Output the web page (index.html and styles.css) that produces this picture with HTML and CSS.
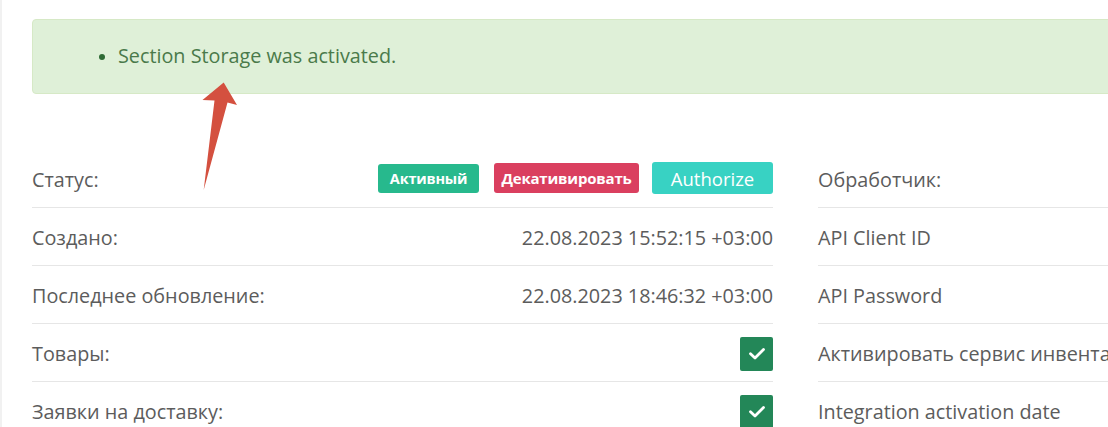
FILE: index.html
```html
<!DOCTYPE html>
<html lang="ru">
<head>
<meta charset="utf-8">
<title>Section Storage</title>
<link rel="stylesheet" href="styles.css">
</head>
<body>
<div class="page">
  <div class="alert">
    <ul class="alert-list">
      <li>Section Storage was activated.</li>
    </ul>
  </div>

  <div class="cols">
    <div class="col">
      <div class="row">
        <span class="label">Статус:</span>
        <span class="value buttons">
          <span class="badge badge-green">Активный</span>
          <span class="badge badge-red">Декативировать</span>
          <span class="btn-auth">Authorize</span>
        </span>
      </div>
      <div class="row">
        <span class="label">Создано:</span>
        <span class="value">22.08.2023 15:52:15 +03:00</span>
      </div>
      <div class="row">
        <span class="label">Последнее обновление:</span>
        <span class="value">22.08.2023 18:46:32 +03:00</span>
      </div>
      <div class="row">
        <span class="label">Товары:</span>
        <span class="check"><svg width="18" height="13" viewBox="0 0 18 13"><path d="M2.5 6.8 L7 11 L15.5 2.5" fill="none" stroke="#fff" stroke-width="2.8" stroke-linecap="round" stroke-linejoin="round"/></svg></span>
      </div>
      <div class="row">
        <span class="label">Заявки на доставку:</span>
        <span class="check"><svg width="18" height="13" viewBox="0 0 18 13"><path d="M2.5 6.8 L7 11 L15.5 2.5" fill="none" stroke="#fff" stroke-width="2.8" stroke-linecap="round" stroke-linejoin="round"/></svg></span>
      </div>
    </div>
    <div class="col">
      <div class="row"><span class="label">Обработчик:</span></div>
      <div class="row"><span class="label">API Client ID</span></div>
      <div class="row"><span class="label">API Password</span></div>
      <div class="row"><span class="label">Активировать сервис инвентаризации</span></div>
      <div class="row"><span class="label">Integration activation date</span></div>
    </div>
  </div>

  <svg class="arrow" width="60" height="120" viewBox="190 78 60 120">
    <path d="M221.7 82.5 L235 105 L225.5 102.5 L201.7 190 L212.5 100.5 L200.5 100 Z" fill="#d4503f"/>
  </svg>
</div>
</body>
</html>
```

FILE: styles.css
```css
html, body {
  margin: 0;
  padding: 0;
  background: #fff;
  overflow: hidden;
}

body {
  font-family: "Open Sans", "Liberation Sans", sans-serif;
  color: #5c5c5c;
  width: 1108px;
  height: 427px;
  border-left: 2px solid #f1f1f1;
  box-sizing: border-box;
}

.page {
  position: relative;
  width: 1600px;
  padding: 19px 0 0 30px;
}

.alert {
  width: 1527px;
  height: 75px;
  box-sizing: border-box;
  background: #dff0d8;
  border: 1px solid #d6e9c6;
  border-radius: 4px;
  color: #4a7a4a;
  display: flex;
  align-items: center;
}

.alert-list {
  margin: 0;
  padding: 0 0 3px 85px;
  font-size: 19.8px;
  list-style: disc;
}

.alert-list li::marker {
  color: #2f6b35;
  font-size: 17px;
}

.cols {
  display: flex;
  gap: 45px;
  margin-top: 55px;
}

.col {
  width: 741px;
  flex: none;
}

.row {
  height: 55px;
  border-bottom: 1px solid #e6e6e6;
  display: flex;
  align-items: center;
  justify-content: space-between;
  font-size: 19.8px;
  padding-top: 2px;
  box-sizing: content-box;
  white-space: nowrap;
}

.row:first-child {
  height: 56px;
}

.label {
  color: #5c5c5c;
}

.value {
  color: #5c5c5c;
}

.buttons {
  display: flex;
  align-items: center;
  gap: 14px;
  margin-top: -2px;
}

.badge {
  display: inline-flex;
  align-items: center;
  justify-content: center;
  height: 29px;
  border-radius: 3px;
  color: #fff;
  font-size: 14.5px;
  font-weight: 700;
  letter-spacing: -0.2px;
}

.badge-green {
  background: #27b98d;
  width: 101px;
}

.badge-red {
  background: #da3f5f;
  width: 145px;
  height: 30px;
  margin-left: 1px;
  font-size: 15px;
}

.btn-auth {
  display: inline-flex;
  align-items: center;
  justify-content: center;
  width: 121px;
  height: 32px;
  margin-left: -1px;
  background: #38d2c3;
  border-radius: 3px;
  color: #fff;
  font-size: 18.5px;
}

.check {
  width: 33px;
  height: 34px;
  background: #238758;
  border-radius: 2px;
  display: flex;
  align-items: center;
  justify-content: center;
}

.arrow {
  position: absolute;
  left: 190px;
  top: 78px;
}
```
